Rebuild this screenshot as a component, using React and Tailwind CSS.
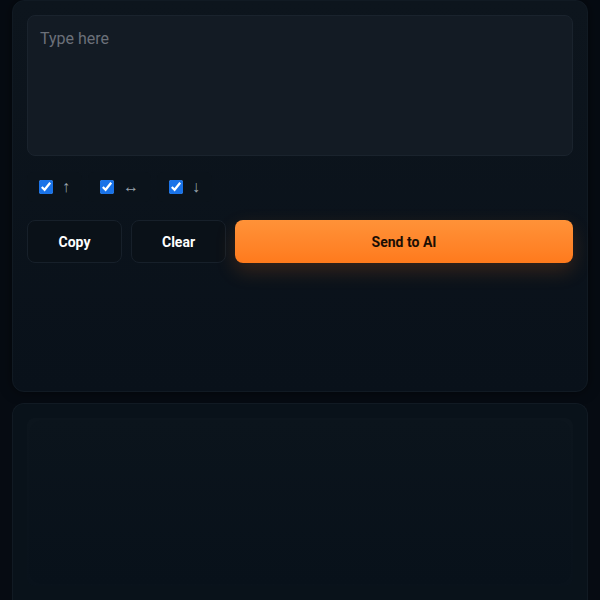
import { useState } from 'react';

const OPTS = [
  { id: 'up', label: '↑' },
  { id: 'both', label: '↔' },
  { id: 'down', label: '↓' },
];

export default function App() {
  const [text, setText] = useState('');

  return (
    <div className="min-h-screen bg-[#060b12] px-3 pb-0 flex flex-col gap-[11px] font-['Roboto','Liberation_Sans',sans-serif]">
      {/* Input card */}
      <section className="h-[392px] rounded-xl border border-[#111a23] bg-gradient-to-b from-[#0d151d] to-[#09111a] px-[14px] pt-[14px] shadow-[0_0_12px_rgba(0,0,0,0.5)]">
        <textarea
          value={text}
          onChange={e => setText(e.target.value)}
          placeholder="Type here"
          className="block w-full h-[141px] resize-none rounded-lg border border-[#1a232d] bg-[#131b24] px-3 py-[11px] text-base text-gray-200 placeholder:text-[#6b7079] outline-none"
        />

        <div className="mt-[16px] flex items-center gap-[6px]">
          {OPTS.map(o => (
            <label key={o.id} className="flex items-center gap-[9px] rounded-md bg-[#0b131b] pl-[12px] pr-[12px] py-[7px] text-[#9aa3ad] text-base leading-none">
              <input type="checkbox" defaultChecked className="w-[14px] h-[14px] accent-[#1a73e8]" />
              <span>{o.label}</span>
            </label>
          ))}
        </div>

        <div className="mt-[18px] flex gap-[9px]">
          <button className="w-[95px] h-[43px] rounded-lg border border-[#17202a] bg-[#0a1118] text-white text-sm font-bold">
            Copy
          </button>
          <button className="w-[95px] h-[43px] rounded-lg border border-[#17202a] bg-[#0a1118] text-white text-sm font-bold">
            Clear
          </button>
          <button className="flex-1 h-[43px] rounded-lg bg-gradient-to-b from-[#ff9238] to-[#ff7a1c] text-[#1b0e04] text-sm font-bold shadow-[0_8px_20px_rgba(255,122,28,0.18)]">
            Send to AI
          </button>
        </div>
      </section>

      {/* Output card */}
      <section className="flex-1 min-h-[197px] rounded-t-xl border border-b-0 border-[#111a23] bg-[#09121a] px-[14px] pt-[14px]">
        <div className="h-[168px] rounded-lg bg-gradient-to-b from-[#0b141c] to-[#08111a] shadow-[inset_0_0_14px_rgba(255,255,255,0.02)]" />
      </section>
    </div>
  );
}
